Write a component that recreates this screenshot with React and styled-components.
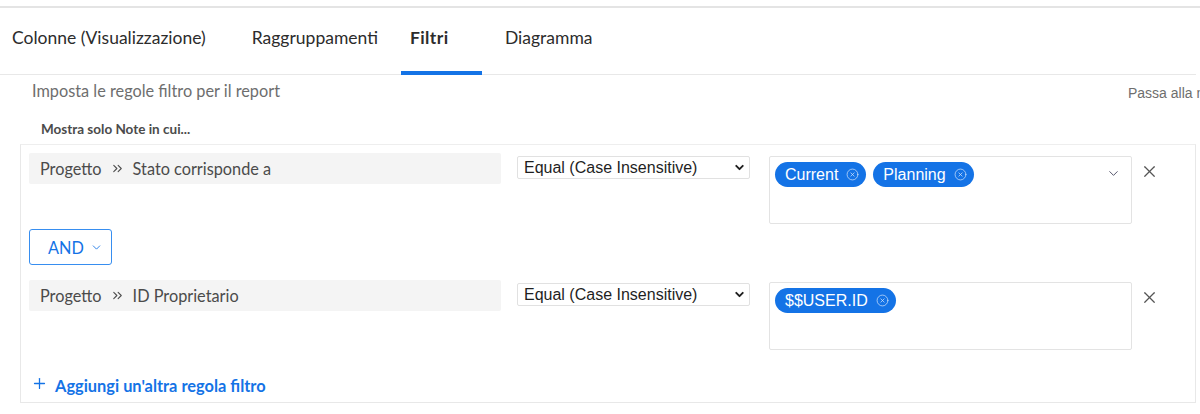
import React from "react";
import styled, { createGlobalStyle } from "styled-components";
import { ChevronDown, ChevronsRight, X, CircleX, Plus } from "lucide-react";

const GlobalStyle = createGlobalStyle`
  html, body {
    margin: 0;
    padding: 0;
    background: #ffffff;
    overflow: hidden;
  }
  body {
    font-family: Lato, "Open Sans", sans-serif;
    color: #2c2c2c;
  }
`;

const Page = styled.div`
  width: 1200px;
  height: 414px;
  padding-top: 6px;
  box-sizing: border-box;
`;

const TopRule = styled.div`
  height: 2px;
  background: #e4e4e4;
`;

const TabList = styled.div`
  display: flex;
  height: 67px;
  width: 1196px;
  border-bottom: 1px solid #e8e8e8;
  box-sizing: border-box;
`;

const Tab = styled.div`
  position: relative;
  display: flex;
  align-items: center;
  box-sizing: border-box;
  min-width: ${(p) => (p.$active ? "81px" : "0")};
  padding: ${(p) => (p.$active ? "0 10px 7px 9px" : "0 23px 7px")};
  margin-left: ${(p) => (p.$first ? "-11px" : "0")};
  font-size: 17.5px;
  font-weight: ${(p) => (p.$active ? 700 : 400)};
  letter-spacing: ${(p) => (p.$active ? "0.4px" : "0")};
  color: #2c2c2c;
  white-space: nowrap;

  &::after {
    content: "";
    display: ${(p) => (p.$active ? "block" : "none")};
    position: absolute;
    left: 0;
    right: 0;
    bottom: -1px;
    height: 4px;
    background: #1473e6;
  }
`;

const Body = styled.div`
  padding-top: 4px;
`;

const HeaderRow = styled.div`
  display: flex;
  align-items: center;
  height: 22px;
  padding-left: 32px;
`;

const Intro = styled.span`
  font-size: 16.3px;
  color: #6e6e6e;
`;

const SwitchLink = styled.span`
  margin-left: auto;
  flex: 0 0 72px;
  width: 72px;
  min-width: 0;
  overflow: hidden;
  margin-top: 6px;
  font-family: "Liberation Sans", Arial, sans-serif;
  font-size: 14px;
  color: #6e6e6e;
  white-space: nowrap;
`;

const Caption = styled.div`
  padding: 20px 0 0 41px;
  height: 19px;
  font-size: 13.5px;
  font-weight: 700;
  color: #4b4b4b;
`;

const Card = styled.div`
  margin: 4px 0 0 20px;
  width: 1176px;
  height: 259px;
  box-sizing: border-box;
  border: 1px solid #e8e8e8;
  border-top-color: #eeeeee;
  padding: 8px 8px 0 8px;
`;

const RuleRow = styled.div`
  display: flex;
  align-items: flex-start;
`;

const FieldPath = styled.div`
  display: flex;
  align-items: center;
  gap: 8px;
  width: 472px;
  height: 31px;
  padding-left: 11px;
  box-sizing: border-box;
  background: #f4f4f4;
  border-radius: 2px;
  font-size: 16.3px;
  color: #4b4b4b;
`;

const Operator = styled.div`
  display: flex;
  align-items: center;
  justify-content: space-between;
  margin: 3px 0 0 16px;
  width: 233px;
  height: 23px;
  padding: 0 3px 0 6px;
  box-sizing: border-box;
  border: 1px solid #e1e1e1;
  border-radius: 2px;
  font-family: "Liberation Sans", Arial, sans-serif;
  font-size: 16px;
  color: #1f1f1f;
`;

const ValueBox = styled.div`
  position: relative;
  display: flex;
  align-items: flex-start;
  flex-wrap: wrap;
  gap: 7px;
  margin: ${(p) => p.$top} 0 0 19px;
  width: 363px;
  height: 68px;
  padding: 5px 30px 0 5px;
  box-sizing: border-box;
  border: 1px solid #e3e3e3;
  border-radius: 2px;
`;

const Chip = styled.span`
  display: inline-flex;
  align-items: center;
  gap: 8px;
  height: 25px;
  padding: 0 7px 0 10px;
  border-radius: 13px;
  background: #1473e6;
  color: #ffffff;
  font-family: "Liberation Sans", Arial, sans-serif;
  font-size: 16px;
`;

const BoxCaret = styled.span`
  position: absolute;
  top: 9px;
  right: 10px;
  display: flex;
  color: #4b4b62;
`;

const RemoveButton = styled.span`
  display: flex;
  margin: ${(p) => p.$top} 0 0 8px;
  color: #555555;
`;

const AndButton = styled.div`
  display: inline-flex;
  align-items: center;
  gap: 6px;
  margin: 5px 0 15px 0;
  width: 83px;
  height: 36px;
  padding-left: 18px;
  box-sizing: border-box;
  border: 1px solid #378ef0;
  border-radius: 3px;
  color: #1473e6;
  font-size: 16.3px;
`;

const AddRule = styled.div`
  display: flex;
  align-items: center;
  gap: 7px;
  margin-top: 21px;
  padding-left: 2px;
  color: #1473e6;
  font-size: 16.4px;
  font-weight: 700;
`;

const AddText = styled.span`
  margin-top: 5px;
`;

const rules = [
  {
    field: "Stato corrisponde a",
    values: ["Current", "Planning"],
    caret: true,
    boxTop: "3px",
    xTop: "9px",
  },
  {
    field: "ID Proprietario",
    values: ["$$USER.ID"],
    caret: false,
    boxTop: "2px",
    xTop: "8px",
  },
];

const Rule = ({ rule }) => (
  <RuleRow>
    <FieldPath>
      Progetto
      <ChevronsRight size={15} strokeWidth={1.7} color="#4b4b4b" />
      {rule.field}
    </FieldPath>
    <Operator>
      Equal (Case Insensitive)
      <ChevronDown size={13} strokeWidth={3.5} color="#1f1f1f" />
    </Operator>
    <ValueBox $top={rule.boxTop}>
      {rule.values.map((v) => (
        <Chip key={v}>
          {v}
          <CircleX size={13} strokeWidth={1.3} color="#d6e6fb" />
        </Chip>
      ))}
      {rule.caret && (
        <BoxCaret>
          <ChevronDown size={15} strokeWidth={1.5} />
        </BoxCaret>
      )}
    </ValueBox>
    <RemoveButton $top={rule.xTop}>
      <X size={19} strokeWidth={1.5} />
    </RemoveButton>
  </RuleRow>
);

const App = () => (
  <Page>
    <GlobalStyle />
    <TopRule />
    <TabList>
      <Tab $first>Colonne (Visualizzazione)</Tab>
      <Tab>Raggruppamenti</Tab>
      <Tab $active>Filtri</Tab>
      <Tab>Diagramma</Tab>
    </TabList>
    <Body>
      <HeaderRow>
        <Intro>Imposta le regole filtro per il report</Intro>
        <SwitchLink>Passa alla modalità testo</SwitchLink>
      </HeaderRow>
      <Caption>Mostra solo Note in cui...</Caption>
      <Card>
        <Rule rule={rules[0]} />
        <AndButton>
          AND
          <ChevronDown size={13} strokeWidth={1.6} />
        </AndButton>
        <Rule rule={rules[1]} />
        <AddRule>
          <Plus size={17} strokeWidth={1.8} />
          <AddText>Aggiungi un'altra regola filtro</AddText>
        </AddRule>
      </Card>
    </Body>
  </Page>
);

export default App;
